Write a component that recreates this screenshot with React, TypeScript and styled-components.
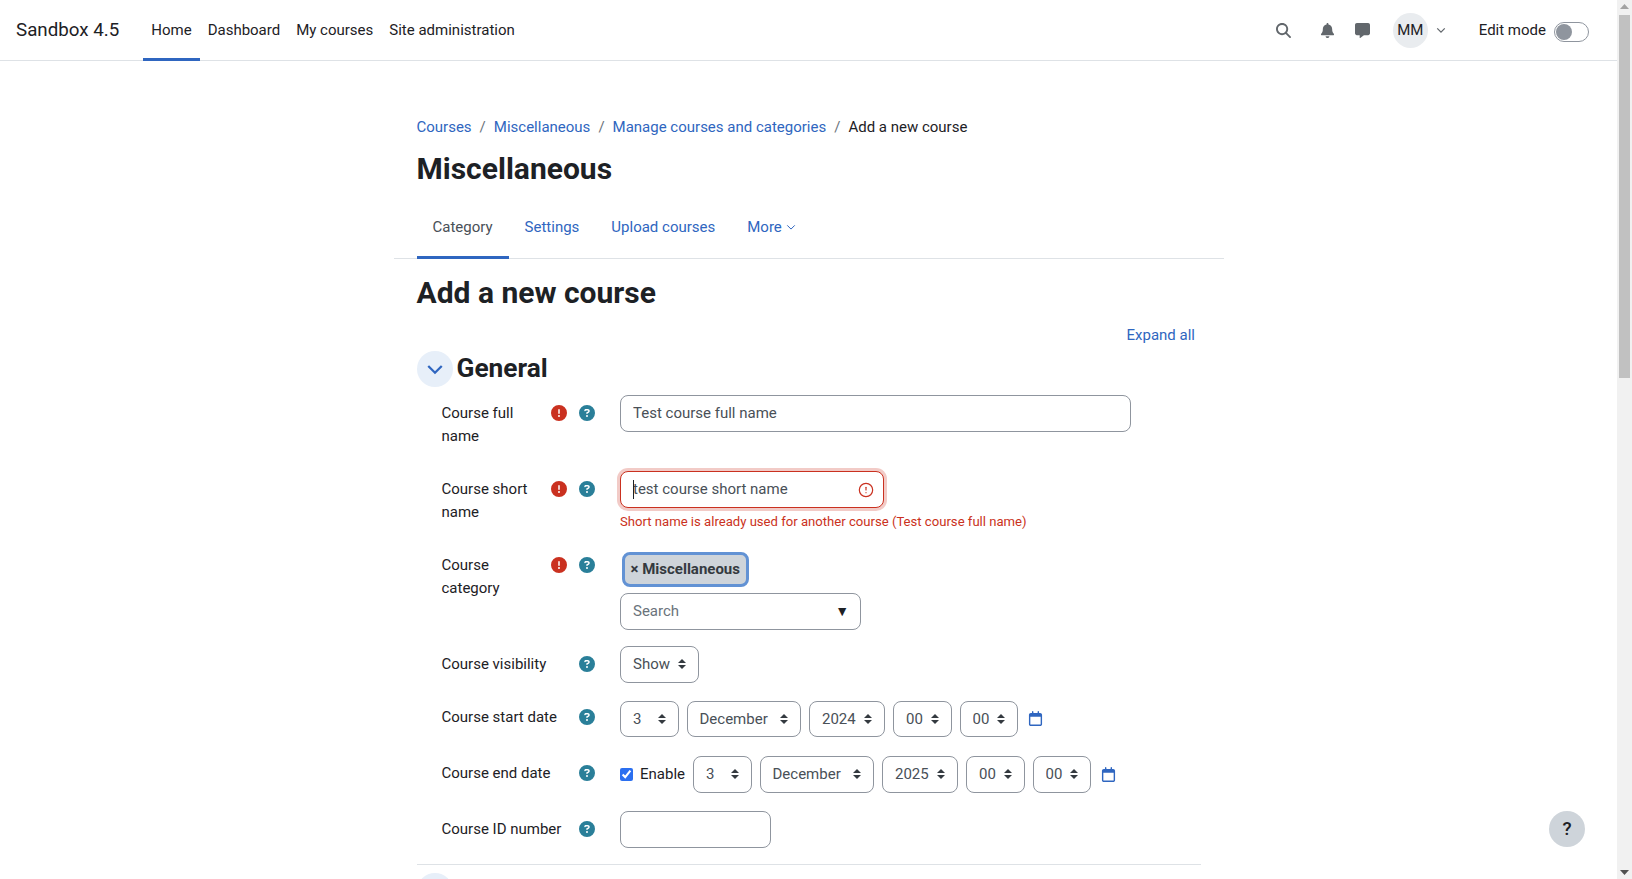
import styled, { createGlobalStyle } from "styled-components";
import { CircleAlert } from "lucide-react";
import { FaCommentAlt } from "react-icons/fa";
import {
  FaBell,
  FaCircleExclamation,
  FaCircleQuestion,
  FaMagnifyingGlass,
  FaRegCalendar,
} from "react-icons/fa6";

const arrows =
  "url(\"data:image/svg+xml,%3Csvg xmlns='http://www.w3.org/2000/svg' viewBox='0 0 8 10'%3E%3Cpath fill='%23343a40' d='M4 0 8 4H0zM4 10 0 6h8z'/%3E%3C/svg%3E\")";

const GlobalStyle = createGlobalStyle`
  body {
    margin: 0;
    background: #fff;
    color: #1d2125;
    font-family: Roboto, "Liberation Sans", sans-serif;
    font-size: 15px;
    line-height: 22.5px;
  }
  a {
    color: #2f66c0;
    text-decoration: none;
  }
`;

const Page = styled.div`
  height: 100vh;
  overflow: hidden;
  padding-right: 15px;
`;

const ScrollTrack = styled.div`
  position: fixed;
  top: 0;
  right: 0;
  bottom: 0;
  display: flex;
  flex-direction: column;
  align-items: center;
  width: 15px;
  background: #f1f1f1;
`;

const ScrollArrow = styled.svg`
  flex: none;
  width: 15px;
  height: 15px;
`;

const ScrollThumb = styled.div`
  width: 11px;
  height: 363px;
  background: #c1c1c1;
`;

const ScrollSpace = styled.div`
  flex: 1;
`;

const Navbar = styled.nav`
  display: flex;
  align-items: stretch;
  height: 60px;
  padding: 0 28px 0 16px;
  border-bottom: 1px solid #dee2e6;
`;

const Brand = styled.a`
  align-self: center;
  margin-right: 24px;
  color: #1d2125;
  font-size: 18.75px;
`;

const NavLink = styled.a<{ $active?: boolean }>`
  display: flex;
  align-items: center;
  padding: 0 8px;
  color: #1d2125;
  border-bottom: 3px solid ${(p) => (p.$active ? "#2f66c0" : "transparent")};
  padding-top: 3px;
  margin-bottom: -1px;
`;

const NavTools = styled.div`
  display: flex;
  align-items: center;
  margin-left: auto;
  color: #62676c;
`;

const ToolIcon = styled.span<{ $gap: number }>`
  display: flex;
  margin-right: ${(p) => p.$gap}px;
`;

const Avatar = styled.span`
  display: flex;
  align-items: center;
  justify-content: center;
  width: 35px;
  height: 35px;
  margin-right: 8.5px;
  border-radius: 50%;
  background: #e9ecef;
  color: #1d2125;
`;

const EditLabel = styled.span`
  margin: 0 8px 0 32.5px;
  color: #1d2125;
`;

const Toggle = styled.span`
  display: block;
  box-sizing: border-box;
  width: 35px;
  height: 20px;
  margin-top: 3px;
  padding: 1px;
  border: 1px solid #8f959e;
  border-radius: 10px;
`;

const Knob = styled.span`
  display: block;
  width: 16px;
  height: 16px;
  border-radius: 50%;
  background: #8f959e;
`;

const Main = styled.main`
  box-sizing: border-box;
  width: 830px;
  margin: 0 auto;
  padding-top: 55px;
`;

const Inner = styled.div`
  padding: 0 22.5px 0 23px;
`;

const Breadcrumb = styled.ol`
  display: flex;
  margin: 0;
  padding: 0;
  list-style: none;
`;

const Crumb = styled.li`
  & + &::before {
    content: "/";
    padding: 0 8px;
    color: #6a737b;
  }
`;

const PageTitle = styled.h1`
  margin: 12.5px 0 0;
  font-size: 30px;
  line-height: 36px;
  font-weight: 700;
`;

const Tabs = styled.div`
  display: flex;
  margin-top: 11px;
  padding-left: 23px;
  border-bottom: 1px solid #dee2e6;
`;

const Tab = styled.a<{ $active?: boolean }>`
  display: flex;
  align-items: center;
  gap: 4px;
  height: 60.5px;
  box-sizing: border-box;
  padding: 0 16px;
  margin-bottom: -1px;
  color: ${(p) => (p.$active ? "#495057" : "#2f66c0")};
  border-bottom: 3px solid ${(p) => (p.$active ? "#2f66c0" : "transparent")};
`;

const SectionTitle = styled.h2`
  margin: 16px 0 0;
  font-size: 30px;
  line-height: 36px;
  font-weight: 700;
`;

const ExpandRow = styled.div`
  display: flex;
  justify-content: flex-end;
  margin-top: 13px;
  padding-right: 6px;
`;

const SectionHead = styled.div`
  display: flex;
  align-items: center;
  gap: 4px;
  height: 36px;
  margin-top: 4.5px;
  margin-bottom: 8.5px;
`;

const Collapse = styled.span`
  display: flex;
  align-items: center;
  justify-content: center;
  width: 36px;
  height: 36px;
  border-radius: 50%;
  background: #e7eff9;
  color: #2f66c0;
`;

const SectionName = styled.h3`
  margin: 0 0 2px;
  font-size: 26.25px;
  line-height: 32px;
  font-weight: 700;
`;

const Row = styled.div<{ $min?: number }>`
  display: flex;
  min-height: ${(p) => p.$min ?? 36.5}px;
  margin-bottom: 16px;
  padding-left: 25px;
`;

const LabelCol = styled.div<{ $top?: number }>`
  display: flex;
  align-items: flex-start;
  flex: 0 0 153.5px;
  margin-right: 25px;
  padding-top: ${(p) => p.$top ?? 7}px;
`;

const LabelText = styled.label<{ $narrow?: boolean }>`
  ${(p) => (p.$narrow ? "flex: 0 0 104px;" : "white-space: nowrap;")}
`;

const HelpIcons = styled.span`
  display: flex;
  gap: 12px;
  margin-left: auto;
  padding-top: 3px;
`;

const RequiredIcon = styled(FaCircleExclamation)`
  color: #ca3120;
  font-size: 16px;
`;

const HelpIcon = styled(FaCircleQuestion)`
  color: #2a7f99;
  font-size: 16px;
`;

const Field = styled.div`
  flex: 1;
  min-width: 0;
`;

const TextInput = styled.input<{ $w: number; $invalid?: boolean }>`
  display: block;
  box-sizing: border-box;
  width: ${(p) => p.$w}px;
  height: 36.5px;
  padding: 6px 12px;
  border: 1px solid ${(p) => (p.$invalid ? "#ca3120" : "#8f959e")};
  border-radius: 8px;
  outline: none;
  color: #495057;
  font: inherit;
  ${(p) => p.$invalid && "box-shadow: 0 0 0 3px rgba(202, 49, 32, 0.25);"}
`;

const InputWrap = styled.div`
  position: relative;
  width: 264px;
`;

const Caret = styled.span`
  position: absolute;
  top: 9px;
  left: 12.5px;
  width: 1px;
  height: 19px;
  background: #1d2125;
`;

const InvalidMark = styled(CircleAlert)`
  position: absolute;
  top: 10.5px;
  right: 10px;
  color: #ca3120;
`;

const ErrorText = styled.div`
  margin-top: 4px;
  color: #ca3120;
  font-size: 13.125px;
  line-height: 19.5px;
`;

const Tag = styled.span`
  display: inline-flex;
  align-items: center;
  box-sizing: border-box;
  height: 35px;
  margin: 5px 0 5.5px 1.5px;
  padding: 0 6px;
  border: 3px solid #6292d4;
  border-radius: 8px;
  background: #ced4da;
  color: #343a40;
  font-weight: 700;
`;

const SearchBox = styled.div`
  display: flex;
  align-items: center;
  justify-content: space-between;
  box-sizing: border-box;
  width: 241px;
  height: 37px;
  margin-bottom: 0.5px;
  padding: 0 11px 0 12px;
  border: 1px solid #8f959e;
  border-radius: 8px;
  color: #6a737b;
`;

const SearchCaret = styled.span`
  color: #1d2125;
  font-size: 14px;
`;

const Controls = styled.div<{ $top?: number }>`
  display: flex;
  align-items: flex-start;
  gap: 8px;
  margin-top: ${(p) => p.$top ?? 0}px;
`;

const Select = styled.select<{ $w: number }>`
  box-sizing: border-box;
  width: ${(p) => p.$w}px;
  height: 36.5px;
  padding: 0 12px;
  appearance: none;
  border: 1px solid #8f959e;
  border-radius: 8px;
  background: #fff ${arrows} no-repeat right 12px center / 8px 10px;
  color: #495057;
  font: inherit;
`;

const CalendarLink = styled.a`
  display: flex;
  align-self: center;
  margin-left: 2px;
  color: #2f66c0;
  font-size: 15px;
`;

const EnableLabel = styled.label`
  display: flex;
  align-items: center;
  height: 36.5px;
  gap: 7px;
`;

const Check = styled.input`
  width: 13px;
  height: 13px;
  margin: 0;
  accent-color: #2b6ff0;
`;

const Divider = styled.hr`
  margin: 0 0 8px;
  border: 0;
  border-top: 1px solid #dee2e6;
`;

const HelpButton = styled.button`
  position: fixed;
  right: 47px;
  bottom: 32px;
  width: 36px;
  height: 36px;
  padding: 0;
  border: 0;
  border-radius: 50%;
  background: #ced4da;
  color: #1d2125;
  font: 500 18.75px Roboto, sans-serif;
`;

function Chevron({ size, weight = 1.5 }: { size: number; weight?: number }) {
  return (
    <svg width={size} height={size} viewBox="0 0 12 12" fill="none" stroke="currentColor" strokeWidth={weight}>
      <path d="M1.5 4 6 8.5 10.5 4" />
    </svg>
  );
}

function Help() {
  return <HelpIcon />;
}

function Required() {
  return (
    <HelpIcons>
      <RequiredIcon />
      <Help />
    </HelpIcons>
  );
}

function Calendar() {
  return (
    <CalendarLink href="#">
      <FaRegCalendar />
    </CalendarLink>
  );
}

const Option = ({ value }: { value: string }) => <option>{value}</option>;

function DateSelects({ year }: { year: string }) {
  return (
    <>
      <Select $w={58.5} defaultValue="3">
        <Option value="3" />
      </Select>
      <Select $w={114.5} defaultValue="December">
        <Option value="December" />
      </Select>
      <Select $w={76} defaultValue={year}>
        <Option value={year} />
      </Select>
      <Select $w={58.5} defaultValue="00">
        <Option value="00" />
      </Select>
      <Select $w={58.5} defaultValue="00">
        <Option value="00" />
      </Select>
      <Calendar />
    </>
  );
}

export default function App() {
  return (
    <Page>
      <GlobalStyle />
      <Navbar>
        <Brand href="#">Sandbox 4.5</Brand>
        <NavLink href="#" $active>
          Home
        </NavLink>
        <NavLink href="#">Dashboard</NavLink>
        <NavLink href="#">My courses</NavLink>
        <NavLink href="#">Site administration</NavLink>
        <NavTools>
          <ToolIcon $gap={28.5}>
            <FaMagnifyingGlass size={15} />
          </ToolIcon>
          <ToolIcon $gap={20}>
            <FaBell size={15} />
          </ToolIcon>
          <ToolIcon $gap={23}>
            <FaCommentAlt size={15} />
          </ToolIcon>
          <Avatar>MM</Avatar>
          <Chevron size={10} />
          <EditLabel>Edit mode</EditLabel>
          <Toggle>
            <Knob />
          </Toggle>
        </NavTools>
      </Navbar>

      <Main>
        <Inner>
          <Breadcrumb>
            <Crumb>
              <a href="#">Courses</a>
            </Crumb>
            <Crumb>
              <a href="#">Miscellaneous</a>
            </Crumb>
            <Crumb>
              <a href="#">Manage courses and categories</a>
            </Crumb>
            <Crumb>Add a new course</Crumb>
          </Breadcrumb>
          <PageTitle>Miscellaneous</PageTitle>
        </Inner>

        <Tabs>
          <Tab href="#" $active>
            Category
          </Tab>
          <Tab href="#">Settings</Tab>
          <Tab href="#">Upload courses</Tab>
          <Tab href="#">
            More <Chevron size={10} weight={1.2} />
          </Tab>
        </Tabs>

        <Inner>
          <SectionTitle>Add a new course</SectionTitle>
          <ExpandRow>
            <a href="#">Expand all</a>
          </ExpandRow>

          <SectionHead>
            <Collapse>
              <Chevron size={18} />
            </Collapse>
            <SectionName>General</SectionName>
          </SectionHead>

          <Row $min={60}>
            <LabelCol>
              <LabelText $narrow>Course full name</LabelText>
              <Required />
            </LabelCol>
            <Field>
              <TextInput $w={511} defaultValue="Test course full name" />
            </Field>
          </Row>

          <Row $min={60}>
            <LabelCol>
              <LabelText $narrow>Course short name</LabelText>
              <Required />
            </LabelCol>
            <Field>
              <InputWrap>
                <TextInput $w={264} $invalid defaultValue="test course short name" />
                <Caret />
                <InvalidMark size={16} strokeWidth={1.8} />
              </InputWrap>
              <ErrorText>Short name is already used for another course (Test course full name)</ErrorText>
            </Field>
          </Row>

          <Row>
            <LabelCol>
              <LabelText $narrow>Course category</LabelText>
              <Required />
            </LabelCol>
            <Field>
              <Tag>× Miscellaneous</Tag>
              <SearchBox>
                Search
                <SearchCaret>▼</SearchCaret>
              </SearchBox>
            </Field>
          </Row>

          <Row $min={37}>
            <LabelCol>
              <LabelText>Course visibility</LabelText>
              <HelpIcons>
                <Help />
              </HelpIcons>
            </LabelCol>
            <Field>
              <Select $w={79} defaultValue="Show">
                <Option value="Show" />
              </Select>
            </Field>
          </Row>

          <Row $min={41}>
            <LabelCol>
              <LabelText>Course start date</LabelText>
              <HelpIcons>
                <Help />
              </HelpIcons>
            </LabelCol>
            <Field>
              <Controls $top={1.5}>
                <DateSelects year="2024" />
              </Controls>
            </Field>
          </Row>

          <Row $min={39}>
            <LabelCol $top={5.5}>
              <LabelText>Course end date</LabelText>
              <HelpIcons>
                <Help />
              </HelpIcons>
            </LabelCol>
            <Field>
              <Controls>
                <EnableLabel>
                  <Check type="checkbox" defaultChecked />
                  Enable
                </EnableLabel>
                <DateSelects year="2025" />
              </Controls>
            </Field>
          </Row>

          <Row>
            <LabelCol>
              <LabelText>Course ID number</LabelText>
              <HelpIcons>
                <Help />
              </HelpIcons>
            </LabelCol>
            <Field>
              <TextInput $w={151} />
            </Field>
          </Row>

          <Divider />
          <SectionHead>
            <Collapse>
              <Chevron size={18} />
            </Collapse>
          </SectionHead>
        </Inner>
      </Main>
      <HelpButton>?</HelpButton>
      <ScrollTrack>
        <ScrollArrow viewBox="0 0 15 15">
          <path fill="#a3a3a3" d="M7.5 4 12 9H3z" />
        </ScrollArrow>
        <ScrollThumb />
        <ScrollSpace />
        <ScrollArrow viewBox="0 0 15 15">
          <path fill="#505050" d="M7.5 11 3 6h9z" />
        </ScrollArrow>
      </ScrollTrack>
    </Page>
  );
}
